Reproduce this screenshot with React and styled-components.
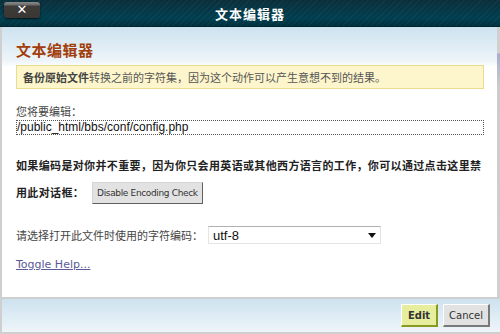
import React from 'react';
import styled, { createGlobalStyle } from 'styled-components';

const Global = createGlobalStyle`
  html, body { margin: 0; padding: 0; background: #fff; }
  body { font-family: "Liberation Sans", "Noto Sans CJK SC", sans-serif; }
`;

const cjk = `"Liberation Sans", "Noto Sans CJK SC", sans-serif`;

const Dialog = styled.div`
  position: relative;
  width: 500px;
  height: 334px;
  display: flex;
  flex-direction: column;
  overflow: hidden;
  background: #fff;
`;

const TitleBar = styled.div`
  height: 27px;
  flex: none;
  display: flex;
  align-items: center;
  justify-content: center;
  position: relative;
  background:
    repeating-linear-gradient(135deg, rgba(255,255,255,0.035) 0 1px, transparent 1px 4px),
    linear-gradient(#0b2f3b, #003f50 70%, #00303d);
  border-bottom: 1px solid #00252f;
  box-sizing: border-box;
`;

const Title = styled.div`
  color: #fff;
  font: bold 13px ${cjk};
  letter-spacing: 1px;
  padding-top: 1px;
`;

const Close = styled.button`
  position: absolute;
  left: 4px;
  top: 2px;
  width: 36px;
  height: 16px;
  padding: 0;
  border: none;
  border-radius: 3px;
  background: linear-gradient(#8a8a8a 0, #6a6a6a 3px, #3e3b38 4px, #3a3633);
  box-shadow: 0 1px 2px rgba(0,0,0,0.7);
  color: #fff;
  font: bold 13px "DejaVu Sans", sans-serif;
  line-height: 16px;
  cursor: pointer;
`;

const Body = styled.div`
  flex: 1;
  position: relative;
  border-left: 2px solid #cfcfcf;
  padding: 0 12px 0 14px;
  background: linear-gradient(#cde2ef 0, #eef5f9 34px, #fff 40px);
`;

const Scroll = styled.div`
  position: absolute;
  right: 0;
  top: 0;
  bottom: 0;
  width: 3px;
  background: linear-gradient(#d0d0d0 0, #d0d0d0 26px, #a9acd0 27px, #cccccc 60px, #d0d0d0);
`;

const Heading = styled.h1`
  margin: 14px 0 0;
  color: #a23e0b;
  font: bold 15px ${cjk};
  letter-spacing: 0.5px;
  line-height: 20px;
`;

const Notice = styled.div`
  margin: 4px 4px 0 0;
  height: 24px;
  box-sizing: border-box;
  border: 1px solid #e9dc8c;
  background: #fdf6cc;
  padding: 0 6px;
  display: flex;
  align-items: center;
  color: #555;
  font: 11px ${cjk};
  b { color: #444; }
`;

const Label = styled.div`
  margin-top: 17px;
  color: #444;
  font: 11px ${cjk};
  line-height: 13px;
`;

const PathInput = styled.div`
  margin: 1px 4px 0 0;
  height: 15px;
  box-sizing: border-box;
  border: 1px dotted #555;
  display: flex;
  align-items: center;
  color: #111;
  font: 12px "Liberation Sans", sans-serif;
  line-height: 13px;
`;

const Para = styled.div`
  margin-top: 24px;
  color: #222;
  font: bold 11px ${cjk};
  letter-spacing: 0.35px;
  line-height: 15px;
  white-space: nowrap;
`;

const ParaLine = styled.div`
  display: flex;
  align-items: center;
  gap: 8px;
  margin-top: ${p => p.$gap || 0}px;
`;

const GreyButton = styled.button`
  height: 22px;
  padding: 0 4px;
  border: 1px solid #d6d6d6;
  border-right-color: #606060;
  border-bottom-color: #606060;
  background: #e2e2e2;
  color: #333;
  font: 9px "DejaVu Sans", sans-serif;
  letter-spacing: -0.35px;
  cursor: pointer;
`;

const SelectRow = styled.div`
  margin-top: 22px;
  display: flex;
  align-items: center;
  gap: 5px;
  color: #444;
  font: 11px ${cjk};
`;

const Select = styled.div`
  width: 173px;
  height: 18px;
  box-sizing: border-box;
  border: 1px solid #e4e4e4;
  border-top-color: #b0b0b0;
  background: #fff;
  display: flex;
  align-items: center;
  justify-content: space-between;
  padding: 0 4px;
  color: #111;
  font: 13px "Liberation Sans", sans-serif;
`;

const Caret = styled.span`
  width: 0;
  height: 0;
  border-left: 4px solid transparent;
  border-right: 4px solid transparent;
  border-top: 5px solid #111;
`;

const Toggle = styled.a`
  display: inline-block;
  margin-top: 14px;
  color: #5a5a9a;
  font: 11px "DejaVu Sans", sans-serif;
  text-decoration: underline;
`;

const Footer = styled.div`
  height: 37px;
  flex: none;
  box-sizing: border-box;
  border-top: 2px solid #cfcfcf;
  border-left: 2px solid #cfcfcf;
  border-bottom: 2px solid #cfcfcf;
  background: linear-gradient(#cde2ef, #eef5f9);
  display: flex;
  justify-content: flex-end;
  align-items: flex-start;
  gap: 5px;
  padding: 5px 10px 0 0;
`;

const Action = styled.button`
  height: 23px;
  padding: 0 ${p => (p.$primary ? 6 : 5)}px;
  border: 1px solid #fff;
  border-right: 2px solid ${p => (p.$primary ? '#8a9a20' : '#7a7a7a')};
  border-bottom: 2px solid ${p => (p.$primary ? '#8a9a20' : '#7a7a7a')};
  background: ${p => (p.$primary ? '#e6ee9e' : '#e2e2e2')};
  color: #333;
  font: ${p => (p.$primary ? 'bold ' : '')}10px "DejaVu Sans", sans-serif;
  cursor: pointer;
`;

export default function App() {
  return (
    <>
      <Global />
      <Dialog>
        <TitleBar>
          <Close>✕</Close>
          <Title>文本编辑器</Title>
        </TitleBar>
        <Body>
          <Scroll />
          <Heading>文本编辑器</Heading>
          <Notice>
            <span><b>备份原始文件</b>转换之前的字符集，因为这个动作可以产生意想不到的结果。</span>
          </Notice>
          <Label>您将要编辑：</Label>
          <PathInput>/public_html/bbs/conf/config.php</PathInput>
          <Para>
            <ParaLine>如果编码是对你并不重要，因为你只会用英语或其他西方语言的工作，你可以通过点击这里禁</ParaLine>
            <ParaLine $gap={8}>
              用此对话框：
              <GreyButton>Disable Encoding Check</GreyButton>
            </ParaLine>
          </Para>
          <SelectRow>
            请选择打开此文件时使用的字符编码：
            <Select>
              utf-8
              <Caret />
            </Select>
          </SelectRow>
          <Toggle href="#">Toggle Help...</Toggle>
        </Body>
        <Footer>
          <Action $primary>Edit</Action>
          <Action>Cancel</Action>
        </Footer>
      </Dialog>
    </>
  );
}
